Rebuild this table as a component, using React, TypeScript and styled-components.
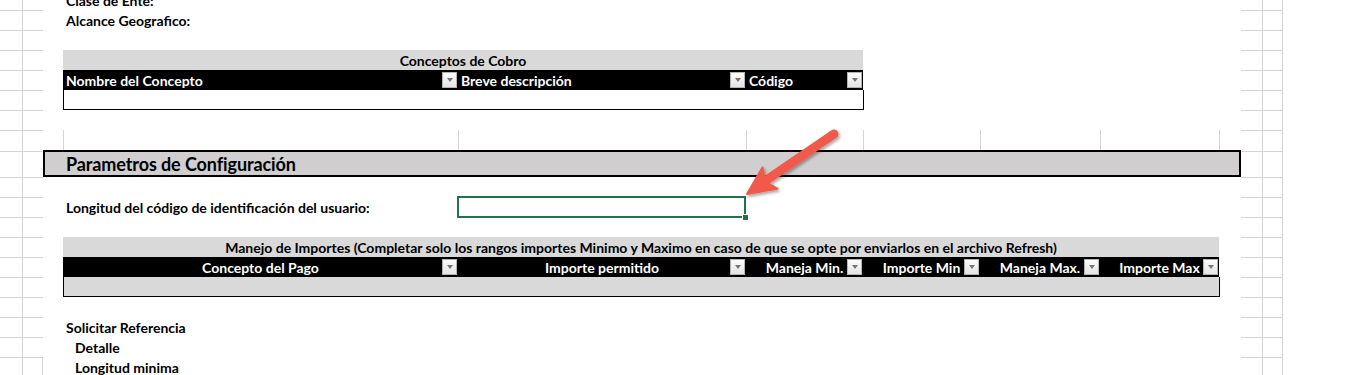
import React from "react";
import styled, { createGlobalStyle } from "styled-components";

const GRID = "#d4d4d4";

const GlobalStyle = createGlobalStyle`
  html, body {
    margin: 0;
    padding: 0;
    background: #ffffff;
    overflow: hidden;
  }
  body {
    font-family: Lato, "Open Sans", "Liberation Sans", sans-serif;
    color: #000000;
  }
`;

//#region sheet
const Sheet = styled.div`
  position: relative;
  display: grid;
  grid-template-columns: 23px 20px 20px 395px 288px 117px 117px 120px 119px 22px 22px 20px 1fr;
  grid-template-rows: repeat(7, 20px) 21px 26px repeat(10, 20px);
  margin-top: -10px;
  font-size: 14px;
  font-weight: 700;
`;

const GutterCell = styled.div<{ $row: number; $col: number; $edge?: boolean }>`
  grid-row: ${(p) => p.$row};
  grid-column: ${(p) => p.$col};
  border-top: 1px solid ${GRID};
  border-right: ${(p) => (p.$edge ? `1px solid ${GRID}` : "none")};
`;

const ColumnMark = styled.div<{ $col: number }>`
  grid-row: 8;
  grid-column: ${(p) => p.$col};
  border-left: 1px solid ${GRID};
  margin-bottom: 1px;
`;

const Label = styled.div<{ $row: number; $indent?: boolean }>`
  grid-row: ${(p) => p.$row};
  grid-column: 3 / span 3;
  display: flex;
  align-items: center;
  padding-left: ${(p) => (p.$indent ? "32px" : "23px")};
  white-space: nowrap;
`;
//#endregion

//#region tables
const Table = styled.div<{ $rows: string; $span: number; $cols: string }>`
  grid-row: ${(p) => p.$rows};
  grid-column: 4 / span ${(p) => p.$span};
  display: grid;
  grid-template-columns: ${(p) => p.$cols};
  grid-template-rows: 20px 20px 20px;
`;

const TitleRow = styled.div`
  grid-column: 1 / -1;
  background: #d9d9d9;
  display: flex;
  align-items: center;
  justify-content: center;
  white-space: nowrap;
  padding-top: 1px;
`;

const HeaderCell = styled.div<{ $center?: boolean }>`
  background: #000000;
  color: #ffffff;
  display: grid;
  grid-template-columns: ${(p) => (p.$center ? "16px 1fr 16px" : "1fr 16px")};
  align-items: center;
  white-space: nowrap;
  padding-left: ${(p) => (p.$center ? "0" : "3px")};
  text-align: ${(p) => (p.$center ? "center" : "left")};
  & > span:first-child {
    grid-column: ${(p) => (p.$center ? "2" : "1")};
  }
`;

const DropButton = styled.i`
  justify-self: end;
  width: 15px;
  height: 16px;
  margin-right: 1px;
  box-sizing: border-box;
  background: linear-gradient(#fbfbfb, #e4e4e4);
  border: 1px solid #b4b4b4;
  display: flex;
  align-items: center;
  justify-content: center;
  &::after {
    content: "";
    border-left: 3.5px solid transparent;
    border-right: 3.5px solid transparent;
    border-top: 4px solid #767676;
  }
`;

const DataRow = styled.div<{ $fill: string }>`
  grid-column: 1 / -1;
  background: ${(p) => p.$fill};
  border: 1px solid #000000;
  border-top: none;
  margin-right: -1px;
`;
//#endregion

//#region config block
const SectionHeader = styled.div`
  grid-row: 9;
  grid-column: 3 / span 8;
  background: #d0cece;
  border: 2px solid #000000;
  margin-top: -1px;
  display: flex;
  align-items: center;
  padding-left: 21px;
  font-size: 18px;
  letter-spacing: -0.1px;
`;

const InputCell = styled.div`
  grid-row: 11;
  grid-column: 5;
  position: relative;
  margin: -1px 0 -1px -1px;
  border: 2px solid #217346;
`;

const FillHandle = styled.span`
  position: absolute;
  right: -4px;
  bottom: -4px;
  width: 5px;
  height: 5px;
  background: #217346;
  border: 1px solid #ffffff;
  border-right: none;
  border-bottom: none;
`;

const ArrowLayer = styled.svg`
  position: absolute;
  left: 730px;
  top: 125px;
  width: 120px;
  height: 90px;
  overflow: visible;
  pointer-events: none;
`;
//#endregion

const conceptColumns = ["Nombre del Concepto", "Breve descripción", "Código"];

const importColumns = [
  "Concepto del Pago",
  "Importe permitido",
  "Maneja Min.",
  "Importe Min",
  "Maneja Max.",
  "Importe Max",
];

const rows = Array.from({ length: 19 }, (_, i) => i + 1);

function RedArrow() {
  // drawn in page coordinates, layer starts at x 730 / y 115
  return (
    <ArrowLayer viewBox="730 115 120 90">
      <defs>
        <filter id="arrowShadow" x="-20%" y="-20%" width="150%" height="150%">
          <feDropShadow dx="1.5" dy="2" stdDeviation="1.6" floodColor="#000" floodOpacity="0.35" />
        </filter>
      </defs>
      <g filter="url(#arrowShadow)">
        <line x1="834" y1="134" x2="768" y2="179" stroke="#f15a4c" strokeWidth="9" strokeLinecap="round" />
        <path d="M747 194 L762.6 167.3 L765.1 181.5 L777.4 188.7 Z" fill="#f15a4c" stroke="#f15a4c" strokeWidth="2" strokeLinejoin="round" />
      </g>
    </ArrowLayer>
  );
}

export default function App() {
  return (
    <>
      <GlobalStyle />
      <Sheet>
        {rows.map((r) => (
          <React.Fragment key={r}>
            <GutterCell $row={r} $col={1} $edge />
            <GutterCell $row={r} $col={2} $edge={r === 19} />
            <GutterCell $row={r} $col={11} $edge />
            <GutterCell $row={r} $col={12} $edge />
          </React.Fragment>
        ))}

        <Label $row={1}>Clase de Ente:</Label>
        <Label $row={2}>Alcance Geografico:</Label>

        <Table $rows="4 / span 3" $span={3} $cols="395px 288px 117px">
          <TitleRow>Conceptos de Cobro</TitleRow>
          {conceptColumns.map((t) => (
            <HeaderCell key={t}>
              <span>{t}</span>
              <DropButton />
            </HeaderCell>
          ))}
          <DataRow $fill="#ffffff" />
        </Table>

        {[4, 5, 6, 7, 8, 9, 10].map((c) => (
          <ColumnMark key={c} $col={c} />
        ))}

        <SectionHeader>Parametros de Configuración</SectionHeader>

        <Label $row={11}>Longitud del código de identificación del usuario:</Label>
        <InputCell>
          <FillHandle />
        </InputCell>

        <Table $rows="13 / span 3" $span={6} $cols="395px 288px 117px 117px 120px 119px">
          <TitleRow>
            Manejo de Importes (Completar solo los rangos importes Minimo y Maximo en caso de que se opte por enviarlos en el archivo Refresh)
          </TitleRow>
          {importColumns.map((t) => (
            <HeaderCell key={t} $center>
              <span>{t}</span>
              <DropButton />
            </HeaderCell>
          ))}
          <DataRow $fill="#d9d9d9" />
        </Table>

        <Label $row={17}>Solicitar Referencia</Label>
        <Label $row={18} $indent>Detalle</Label>
        <Label $row={19} $indent>Longitud minima</Label>

        <RedArrow />
      </Sheet>
    </>
  );
}
